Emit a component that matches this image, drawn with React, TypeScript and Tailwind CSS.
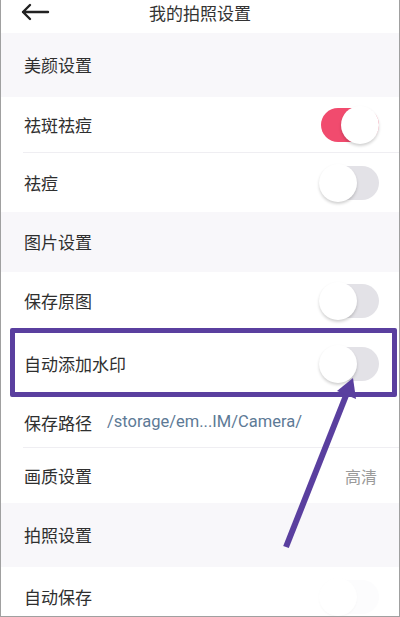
import React from 'react';

const font = { fontFamily: '"Noto Sans CJK SC", "Noto Sans", sans-serif' };

function Toggle({ on = false, faint = false }: { on?: boolean; faint?: boolean }) {
  return (
    <div className="relative w-[64px] h-[38px] shrink-0">
      <div
        className={
          'absolute top-[2px] bottom-[2px] right-0 left-[6px] rounded-full ' +
          (on ? 'bg-[#f14b6e]' : faint ? 'bg-[#fcfcfd]' : 'bg-[#e3e2e7]')
        }
      />
      <div
        className={
          'absolute top-0 w-[38px] h-[38px] rounded-full bg-white ' +
          (on ? 'right-0 ' : 'left-[4px] ') +
          (faint ? 'shadow-[0_1px_2px_rgba(0,0,0,0.03)]' : 'shadow-[0_2px_3px_rgba(0,0,0,0.18)]')
        }
      />
    </div>
  );
}

function Section({ title, h }: { title: string; h: string }) {
  return (
    <div className={'flex items-center bg-[#f8f7fa] pl-[23px] ' + h}>
      <span className="text-[17px] text-[#2f2f2f]">{title}</span>
    </div>
  );
}

function Row({
  label,
  h,
  right,
  divider = false,
}: {
  label: React.ReactNode;
  h: string;
  right?: React.ReactNode;
  divider?: boolean;
}) {
  return (
    <div className={'relative flex items-center justify-between bg-white pl-[23px] pr-[20px] ' + h}>
      <span className="text-[17px] text-[#2f2f2f]">{label}</span>
      {right}
      {divider && <div className="absolute left-[22px] right-0 bottom-0 h-px bg-[#efeef2]" />}
    </div>
  );
}

export default function App() {
  return (
    <div className="relative w-[400px] h-[617px] overflow-hidden bg-white border-x border-b border-[#a0a0a0]" style={font}>
      {/* header */}
      <div className="relative flex items-center justify-center h-[33px] bg-white">
        <svg className="absolute left-[19px] top-[3px]" width="30" height="18" viewBox="0 0 30 18">
          <path d="M28 9H3M10 2L3 9L10 16" fill="none" stroke="#222" strokeWidth="2.4" strokeLinecap="round" strokeLinejoin="round" />
        </svg>
        <span className="text-[17px] text-[#333] -mt-[8px]">我的拍照设置</span>
      </div>

      <Section title="美颜设置" h="h-[64px]" />
      <Row label="祛斑祛痘" h="h-[56px]" right={<Toggle on />} divider />
      <Row label="祛痘" h="h-[59px]" right={<Toggle />} />
      <Section title="图片设置" h="h-[60px]" />
      <Row label="保存原图" h="h-[58px]" right={<Toggle />} />
      <Row label="自动添加水印" h="h-[67px]" right={<Toggle />} />
      <Row
        label={
          <span className="flex items-center">
            保存路径
            <span className="ml-[15px] text-[16.5px] text-[#5d7a96]" style={{ fontFamily: 'Roboto, "Noto Sans", sans-serif' }}>
              /storage/em...IM/Camera/
            </span>
          </span>
        }
        h="h-[51px]"
        divider
      />
      <Row label="画质设置" h="h-[55px]" right={<span className="text-[16px] text-[#9a9a9a] mr-[2px]">高清</span>} />
      <Section title="拍照设置" h="h-[64px]" />
      <Row label="自动保存" h="h-[60px]" right={<Toggle faint />} />

      {/* highlight box */}
      <div className="absolute left-[9px] top-[328px] w-[387px] h-[69px] border-[5px] border-[#5a3f9f] rounded-[2px]" />

      {/* arrow */}
      <svg className="absolute left-0 top-0 pointer-events-none" width="400" height="617" viewBox="0 0 400 617">
        <line x1="285" y1="547" x2="346" y2="393" stroke="#5a3f9f" strokeWidth="6" />
        <polygon points="352,378 355,399 336,391" fill="#5a3f9f" />
      </svg>
    </div>
  );
}
